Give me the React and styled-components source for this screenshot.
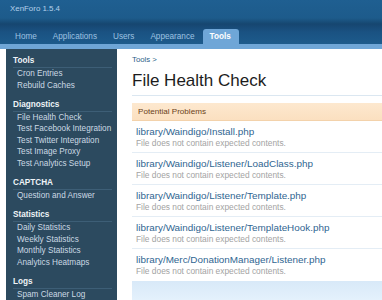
import React from "react";
import styled, { createGlobalStyle } from "styled-components";

const GlobalStyle = createGlobalStyle`
  body {
    margin: 0;
    background: #fff;
    font-family: "Liberation Sans", Arial, sans-serif;
    overflow: hidden;
  }
`;

const tabs = ["Home", "Applications", "Users", "Appearance", "Tools"];

const sections = [
  { title: "Tools", items: ["Cron Entries", "Rebuild Caches"] },
  {
    title: "Diagnostics",
    items: [
      "File Health Check",
      "Test Facebook Integration",
      "Test Twitter Integration",
      "Test Image Proxy",
      "Test Analytics Setup",
    ],
  },
  { title: "CAPTCHA", items: ["Question and Answer"] },
  {
    title: "Statistics",
    items: ["Daily Statistics", "Weekly Statistics", "Monthly Statistics", "Analytics Heatmaps"],
  },
  { title: "Logs", items: ["Spam Cleaner Log"] },
];

const files = [
  "library/Waindigo/Install.php",
  "library/Waindigo/Listener/LoadClass.php",
  "library/Waindigo/Listener/Template.php",
  "library/Waindigo/Listener/TemplateHook.php",
  "library/Merc/DonationManager/Listener.php",
];

const App = () => {
  return (
    <>
      <GlobalStyle />
      <Header>
        <Logo>XenForo 1.5.4</Logo>
        <Tabs>
          {tabs.map((t) => (
            <Tab key={t} $active={t === "Tools"}>
              {t}
            </Tab>
          ))}
        </Tabs>
      </Header>
      <Strip />
      <Body>
        <Sidebar>
          {sections.map((s) => (
            <Section key={s.title}>
              <SectionTitle>{s.title}</SectionTitle>
              {s.items.map((i) => (
                <NavItem key={i}>{i}</NavItem>
              ))}
            </Section>
          ))}
        </Sidebar>
        <Content>
          <Crumb>Tools &gt;</Crumb>
          <Title>File Health Check</Title>
          <Bar>Potential Problems</Bar>
          {files.map((f, idx) => (
            <Row key={f} $last={idx === files.length - 1}>
              <FileLink>{f}</FileLink>
              <Desc>File does not contain expected contents.</Desc>
            </Row>
          ))}
          <Footer />
        </Content>
      </Body>
    </>
  );
};

const Header = styled.header`
  height: 44px;
  background: linear-gradient(
    to bottom,
    #1f5f91 0px,
    #1d5b8b 18px,
    #164670 24px,
    #1a5282 32px,
    #1d5b8c 44px
  );
`;
const Logo = styled.div`
  height: 29px;
  padding-left: 10px;
  line-height: 18px;
  font-size: 7.9px;
  color: #b4d0ea;
`;
const Tabs = styled.nav`
  display: flex;
  padding-left: 7px;
  height: 15px;
`;
const Tab = styled.div`
  padding: 0 8px;
  line-height: 15px;
  font-size: 8.2px;
  color: ${(p) => (p.$active ? "#fff" : "#9ec2e2")};
  font-weight: ${(p) => (p.$active ? "bold" : "normal")};
  background: ${(p) => (p.$active ? "#6fa6d7" : "transparent")};
  border-radius: 3px 3px 0 0;
  padding-left: ${(p) => (p.$active ? "7px" : "8px")};
`;
const Strip = styled.div`
  height: 5px;
  background: #6fa6d7;
`;
const Body = styled.div`
  display: flex;
  height: 251px;
  padding-left: 6px;
`;
const Sidebar = styled.aside`
  width: 111px;
  box-sizing: border-box;
  flex-shrink: 0;
  background: #2c4a5f;
  padding: 6px 5px 0 7px;
  display: flex;
  flex-direction: column;
  gap: 7.5px;
`;
const Section = styled.div`
  display: flex;
  flex-direction: column;
`;
const SectionTitle = styled.div`
  font-size: 8.2px;
  font-weight: bold;
  line-height: 12px;
  color: #eef3f7;
  border-bottom: 1px solid #3d5e76;
`;
const NavItem = styled.div`
  font-size: 8.2px;
  line-height: 11.6px;
  padding-left: 4px;
  color: #cbd9e4;
  white-space: nowrap;
`;
const Content = styled.main`
  flex: 1;
  padding: 5px 0 0 15px;
  display: flex;
  flex-direction: column;
  background: #fff;
`;
const Crumb = styled.div`
  font-size: 7.8px;
  line-height: 12px;
  color: #2e5f88;
`;
const Title = styled.h1`
  margin: 4px 0 0;
  padding-bottom: 3px;
  font-size: 17px;
  font-weight: normal;
  line-height: 22px;
  color: #1c1c1c;
  border-bottom: 1px solid #dbe7f1;
`;
const Bar = styled.div`
  margin-top: 7px;
  height: 18px;
  line-height: 18px;
  padding-left: 6px;
  font-size: 8.1px;
  color: #6a4219;
  background: linear-gradient(to bottom, #fde8cf, #fbe0c0);
  border-bottom: 1px solid #f3d2ab;
  box-sizing: border-box;
`;
const Row = styled.div`
  padding: 5px 0 3px 4px;
  border-bottom: ${(p) => (p.$last ? "none" : "1px solid #e4edf5")};
  height: ${(p) => (p.$last ? "32px" : "auto")};
  box-sizing: border-box;
`;
const FileLink = styled.div`
  font-size: 9.9px;
  line-height: 12px;
  color: #2f6591;
  white-space: nowrap;
`;
const Desc = styled.div`
  font-size: 8.4px;
  line-height: 11px;
  color: #a3a3a3;
  white-space: nowrap;
`;
const Footer = styled.div`
  flex: 1;
  background: linear-gradient(to bottom, #d8e9f8, #e4f1fc);
`;

export default App;
